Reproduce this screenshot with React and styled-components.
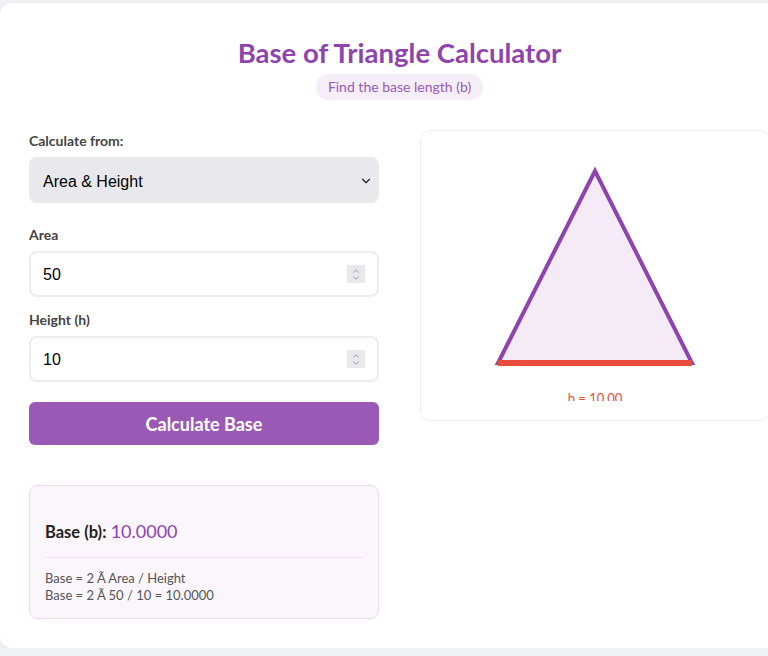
import React, { useState } from 'react';
import styled, { createGlobalStyle } from 'styled-components';
import { ChevronDown, ChevronUp } from 'lucide-react';

const GlobalStyle = createGlobalStyle`
  html, body {
    margin: 0;
    padding: 0;
    background: #f0f2f5;
    overflow: hidden;
  }
  body {
    font-family: Lato, "Noto Sans", sans-serif;
    color: #333;
  }
`;

const Card = styled.div`
  width: 800px;
  box-sizing: border-box;
  margin-top: 3px;
  padding: 34px 30px 29px 29px;
  background: #fff;
  border-radius: 12px;
  box-shadow: 0 2px 10px rgba(0, 0, 0, 0.05);
`;

const Header = styled.header`
  display: flex;
  flex-direction: column;
  align-items: center;
  margin-bottom: 30px;
`;

const Title = styled.h1`
  margin: 0 0 5px;
  font-size: 27.5px;
  line-height: 32px;
  font-weight: 700;
  color: #8e44ad;
`;

const Subtitle = styled.div`
  padding: 4px 12px;
  border-radius: 13px;
  background: #f5eef8;
  color: #9b59b6;
  font-size: 14px;
  line-height: 18px;
`;

const Columns = styled.div`
  display: grid;
  grid-template-columns: 350px 350px;
  gap: 41px;
  align-items: start;
`;

const Form = styled.div`
  display: flex;
  flex-direction: column;
`;

const Field = styled.div`
  display: flex;
  flex-direction: column;
  margin-bottom: ${p => p.$gap || 12}px;
`;

const Label = styled.label`
  font-size: 14px;
  line-height: 21px;
  font-weight: 700;
  color: #444;
  margin-bottom: 6px;
`;

const ControlWrap = styled.div`
  position: relative;
`;

const Select = styled.select`
  appearance: none;
  width: 100%;
  height: 46px;
  box-sizing: border-box;
  padding: 2px 12px 0;
  border: 2px solid #eaeaea;
  border-radius: 8px;
  background: #e9e9ed;
  font-family: "Liberation Sans", Arial, sans-serif;
  font-size: 16px;
  color: #000;
  outline: none;
`;

const SelectArrow = styled.span`
  position: absolute;
  right: 6px;
  top: 17px;
  display: flex;
  pointer-events: none;
  color: #222;
`;

const NumberInput = styled.input`
  width: 100%;
  height: 46px;
  box-sizing: border-box;
  padding: 2px 12px 0;
  border: 2px solid #ebeeed;
  border-radius: 8px;
  background: #fff;
  font-family: "Liberation Sans", Arial, sans-serif;
  font-size: 16px;
  color: #000;
  outline: none;
  -moz-appearance: textfield;
  &::-webkit-inner-spin-button,
  &::-webkit-outer-spin-button {
    -webkit-appearance: none;
    margin: 0;
  }
`;

const Spinner = styled.span`
  position: absolute;
  right: 14px;
  top: 14px;
  width: 18px;
  height: 18px;
  background: #e9e9ed;
  display: flex;
  flex-direction: column;
  align-items: center;
  justify-content: center;
  color: #8f8f9d;
  pointer-events: none;
  svg {
    display: block;
    margin: -1.5px 0;
  }
`;

const Button = styled.button`
  margin-top: 8px;
  height: 43px;
  border: none;
  border-radius: 6px;
  background: #9b59b6;
  color: #fff;
  font-family: Lato, "Noto Sans", sans-serif;
  font-size: 18px;
  font-weight: 700;
  cursor: pointer;
`;

const Result = styled.div`
  margin-top: 40px;
  padding: 15px 15px 14px;
  border: 1px solid #eedcf3;
  border-radius: 8px;
  background: #fbf5fc;
`;

const ResultLine = styled.div`
  margin-top: 17px;
  padding-bottom: 11px;
  border-bottom: 1px solid #efe6f1;
  font-size: 16.5px;
  line-height: 27px;
  color: #222;
  strong {
    font-weight: 700;
  }
`;

const ResultValue = styled.span`
  font-size: 18px;
  color: #8e44ad;
`;

const Formula = styled.div`
  margin-top: 12px;
  font-size: 13px;
  line-height: 17px;
  color: #555;
`;

const Diagram = styled.div`
  border: 1px solid #eeeeee;
  border-radius: 10px;
  padding: 20px 20px 19px;
  svg {
    display: block;
    margin: 0 auto;
  }
`;

export default function App() {
  const [mode, setMode] = useState('ah');
  const [area, setArea] = useState('50');
  const [height, setHeight] = useState('10');
  const [base, setBase] = useState(10);

  const calculate = () => {
    const a = parseFloat(area);
    const h = parseFloat(height);
    if (a > 0 && h > 0) setBase((2 * a) / h);
  };

  return (
    <>
      <GlobalStyle />
      <Card>
        <Header>
          <Title>Base of Triangle Calculator</Title>
          <Subtitle>Find the base length (b)</Subtitle>
        </Header>
        <Columns>
          <Form>
            <Field $gap={21}>
              <Label>Calculate from:</Label>
              <ControlWrap>
                <Select value={mode} onChange={e => setMode(e.target.value)}>
                  <option value="ah">Area &amp; Height</option>
                  <option value="ps">Perimeter &amp; Sides</option>
                </Select>
                <SelectArrow>
                  <ChevronDown size={14} strokeWidth={2} />
                </SelectArrow>
              </ControlWrap>
            </Field>
            <Field>
              <Label>Area</Label>
              <ControlWrap>
                <NumberInput type="number" value={area} onChange={e => setArea(e.target.value)} />
                <Spinner>
                  <ChevronUp size={10} strokeWidth={2.2} />
                  <ChevronDown size={10} strokeWidth={2.2} />
                </Spinner>
              </ControlWrap>
            </Field>
            <Field>
              <Label>Height (h)</Label>
              <ControlWrap>
                <NumberInput type="number" value={height} onChange={e => setHeight(e.target.value)} />
                <Spinner>
                  <ChevronUp size={10} strokeWidth={2.2} />
                  <ChevronDown size={10} strokeWidth={2.2} />
                </Spinner>
              </ControlWrap>
            </Field>
            <Button onClick={calculate}>Calculate Base</Button>
            <Result>
              <ResultLine>
                <strong>Base (b):</strong> <ResultValue>{base.toFixed(4)}</ResultValue>
              </ResultLine>
              <Formula>
                <div>Base = 2 Ã Area / Height</div>
                <div>Base = 2 Ã {area} / {height} = {base.toFixed(4)}</div>
              </Formula>
            </Result>
          </Form>
          <Diagram>
            <svg width="300" height="250" viewBox="0 0 300 250">
              <polygon
                points="150,20 53,212 247,212"
                fill="#f4ebf7"
                stroke="#8e44ad"
                strokeWidth="4"
              />
              <line x1="53" y1="212" x2="247" y2="212" stroke="#e74c3c" strokeWidth="6" />
              <text x="150" y="252" textAnchor="middle" fill="#e74c3c" fontSize="13" fontFamily="Lato, sans-serif">
                b = {base.toFixed(2)}
              </text>
            </svg>
          </Diagram>
        </Columns>
      </Card>
    </>
  );
}
